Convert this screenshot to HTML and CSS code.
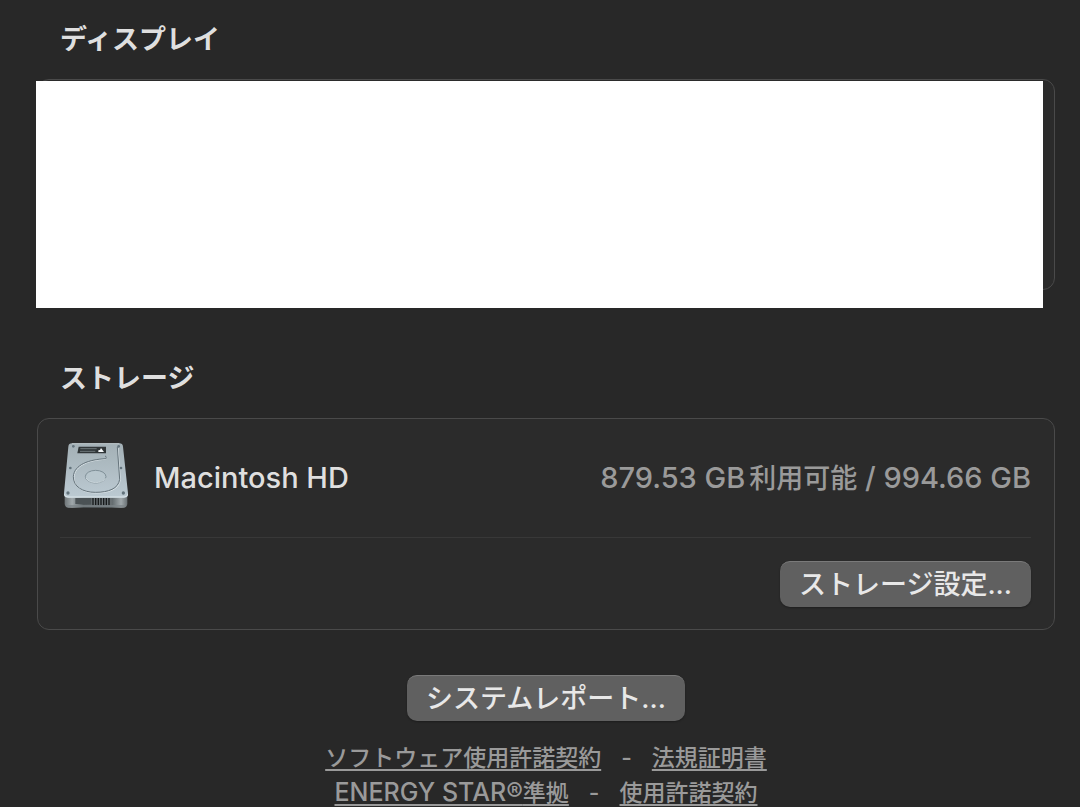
FILE: index.html
```
<!DOCTYPE html>
<html lang="ja">
<head>
  <meta charset="UTF-8">
  <meta name="viewport" content="width=device-width, initial-scale=1.0">
  <title>情報</title>
  <link rel="stylesheet" href="styles.css">
</head>
<body>

  <main class="about">
    <section class="section">
      <h2>ディスプレイ</h2>
      <div class="card display-card">
        <div class="cover"></div>
      </div>
    </section>

    <section class="section">
      <h2>ストレージ</h2>
      <div class="card">
        <div class="row volume">
          <svg class="drive-icon" viewBox="42 36 192 201" aria-hidden="true">
            <defs>
              <linearGradient id="plate" x1="0" y1="0" x2="0" y2="1">
                <stop offset="0" stop-color="#a3b0b6"/>
                <stop offset="1" stop-color="#bccad2"/>
              </linearGradient>
              <linearGradient id="base" x1="0" y1="0" x2="1" y2="0">
                <stop offset="0" stop-color="#6f7679"/>
                <stop offset="0.12" stop-color="#a0a8ab"/>
                <stop offset="0.3" stop-color="#50575a"/>
                <stop offset="0.75" stop-color="#60686b"/>
                <stop offset="0.9" stop-color="#a0a8ab"/>
                <stop offset="1" stop-color="#697073"/>
              </linearGradient>
            </defs>
            <path d="M44 188H232V220Q232 232 222 233H54Q44 232 44 220Z" fill="url(#base)"/>
            <path d="M76 204H124V222H76Z" fill="#4b5255"/>
            <path d="M124 203H186V226H124Z" fill="#697073"/>
            <path d="M129 204V226M137 204V226M145 204V226M153 204V226M161 204V226M169 204V226M177 204V226" stroke="#171a1b" stroke-width="4"/>
            <path d="M50 228H226" stroke="#7d8588" stroke-width="4"/>
            <path d="M66 40H208Q218 40 219 50L234 190Q235 203 222 203H54Q41 203 42 190L55 50Q56 40 66 40Z" fill="url(#plate)"/>
            <path d="M43 193Q45 201 54 201H222Q232 201 233 193" fill="none" stroke="#dde7eb" stroke-width="3"/>
            <path d="M66 41H208" stroke="#d3dde1" stroke-width="2"/>
            <path d="M167 80V88C118 90 74 106 72 142C72 172 100 189 138 189C178 189 207 178 211 150L204 53" fill="none" stroke="#dbe4e8" stroke-width="3"/>
            <path d="M165 78Q170 78 168 86C118 88 72 104 70 140C70 170 98 187 136 187C176 187 205 176 209 148L202 51" fill="none" stroke="#65737b" stroke-width="3"/>
            <ellipse cx="137" cy="140" rx="31" ry="19" fill="#b8c6cd" stroke="#7f8f97" stroke-width="3"/>
            <path d="M108 143C113 162 158 163 167 145" fill="none" stroke="#e0e9ed" stroke-width="2"/>
            <path d="M86 50H168V70H82Z" fill="#303638"/>
            <path d="M91 56H140M90 64H136" stroke="#6e777b" stroke-width="3"/>
            <path d="M145 66V61L150 60L153 54L158 61L162 66Z" fill="#f5f8f9"/>
            <g fill="#63737c">
              <circle cx="70" cy="49" r="4"/>
              <circle cx="206" cy="49" r="4"/>
              <circle cx="61" cy="114" r="4"/>
              <circle cx="213" cy="114" r="4"/>
              <circle cx="54" cy="189" r="5"/>
              <circle cx="220" cy="189" r="5"/>
            </g>
          </svg>
          <span class="volume-name">Macintosh HD</span>
          <span class="volume-space">879.53 GB<span class="available">利用可能</span> / 994.66 GB</span>
        </div>
        <div class="row actions">
          <button type="button">ストレージ設定...</button>
        </div>
      </div>
    </section>

    <button class="report" type="button">システムレポート...</button>

    <footer class="legal">
      <div class="legal-line"><a href="#">ソフトウェア使用許諾契約</a><span class="dash">-</span><a href="#">法規証明書</a></div>
      <div class="legal-line"><a href="#"><span class="latin">ENERGY STAR®</span>準拠</a><span class="dash">-</span><a href="#">使用許諾契約</a></div>
    </footer>
  </main>

</body>
</html>
```
FILE: styles.css
```
* {
  box-sizing: border-box;
}

body {
  margin: 0;
  height: 100vh;
  overflow: hidden;
  background-color: #282828;
  color: #dfdfdf;
  font-family: Inter, "Noto Sans CJK JP", sans-serif;
  font-size: 27px;
  font-weight: 500;
}

.about {
  display: flex;
  flex-direction: column;
  padding: 20px 25px 0 37px;
}

h2 {
  margin: 0 0 19px;
  padding-left: 23px;
  font-size: 27px;
  font-weight: 700;
  line-height: 40px;
}

.card {
  border: 1px solid #4a4a4a;
  border-radius: 12px;
  background-color: #2b2b2b;
}

.display-card {
  position: relative;
  height: 211px;
  margin-bottom: 69px;
}

/* hides the display details, runs past the card's lower edge */
.cover {
  position: absolute;
  top: 1px;
  right: 11px;
  bottom: -19px;
  left: -2px;
  background-color: #fff;
}

.row {
  display: flex;
  align-items: center;
  margin: 0 23px 0 22px;
}

.volume {
  height: 119px;
  padding-left: 4px;
  border-bottom: 1px solid #383838;
}

.drive-icon {
  width: 64px;
  height: 67px;
  margin-bottom: 6px;
}

.volume-name,
.volume-space {
  font-size: 29px;
  line-height: 40px;
}

.volume-name {
  margin-left: 26px;
}

.volume-space {
  margin-left: auto;
  color: #9a9a9a;
}

.available {
  margin-left: 4px;
  font-size: 27px;
}

.actions {
  justify-content: flex-end;
  padding: 23px 0 22px;
}

button {
  height: 46px;
  padding: 0 19px;
  border: none;
  border-top: 1px solid #7a7a7a;
  border-radius: 10px;
  background-color: #606060;
  box-shadow: 0 1px 2px rgba(0, 0, 0, 0.3);
  color: #e8e8e8;
  font-family: inherit;
  font-size: 27px;
  font-weight: 500;
  line-height: 40px;
}

.report {
  align-self: center;
  margin-top: 45px;
}

.legal {
  margin-top: 20px;
  color: #9a9a9a;
  font-size: 23px;
  line-height: 34px;
  text-align: center;
}

.legal-line {
  height: 34px;
}

.dash {
  margin: 0 20px;
}

.latin {
  font-size: 25px;
}

.legal a {
  color: inherit;
  text-decoration: underline;
  text-decoration-thickness: 2px;
  text-underline-offset: 3px;
}
```
